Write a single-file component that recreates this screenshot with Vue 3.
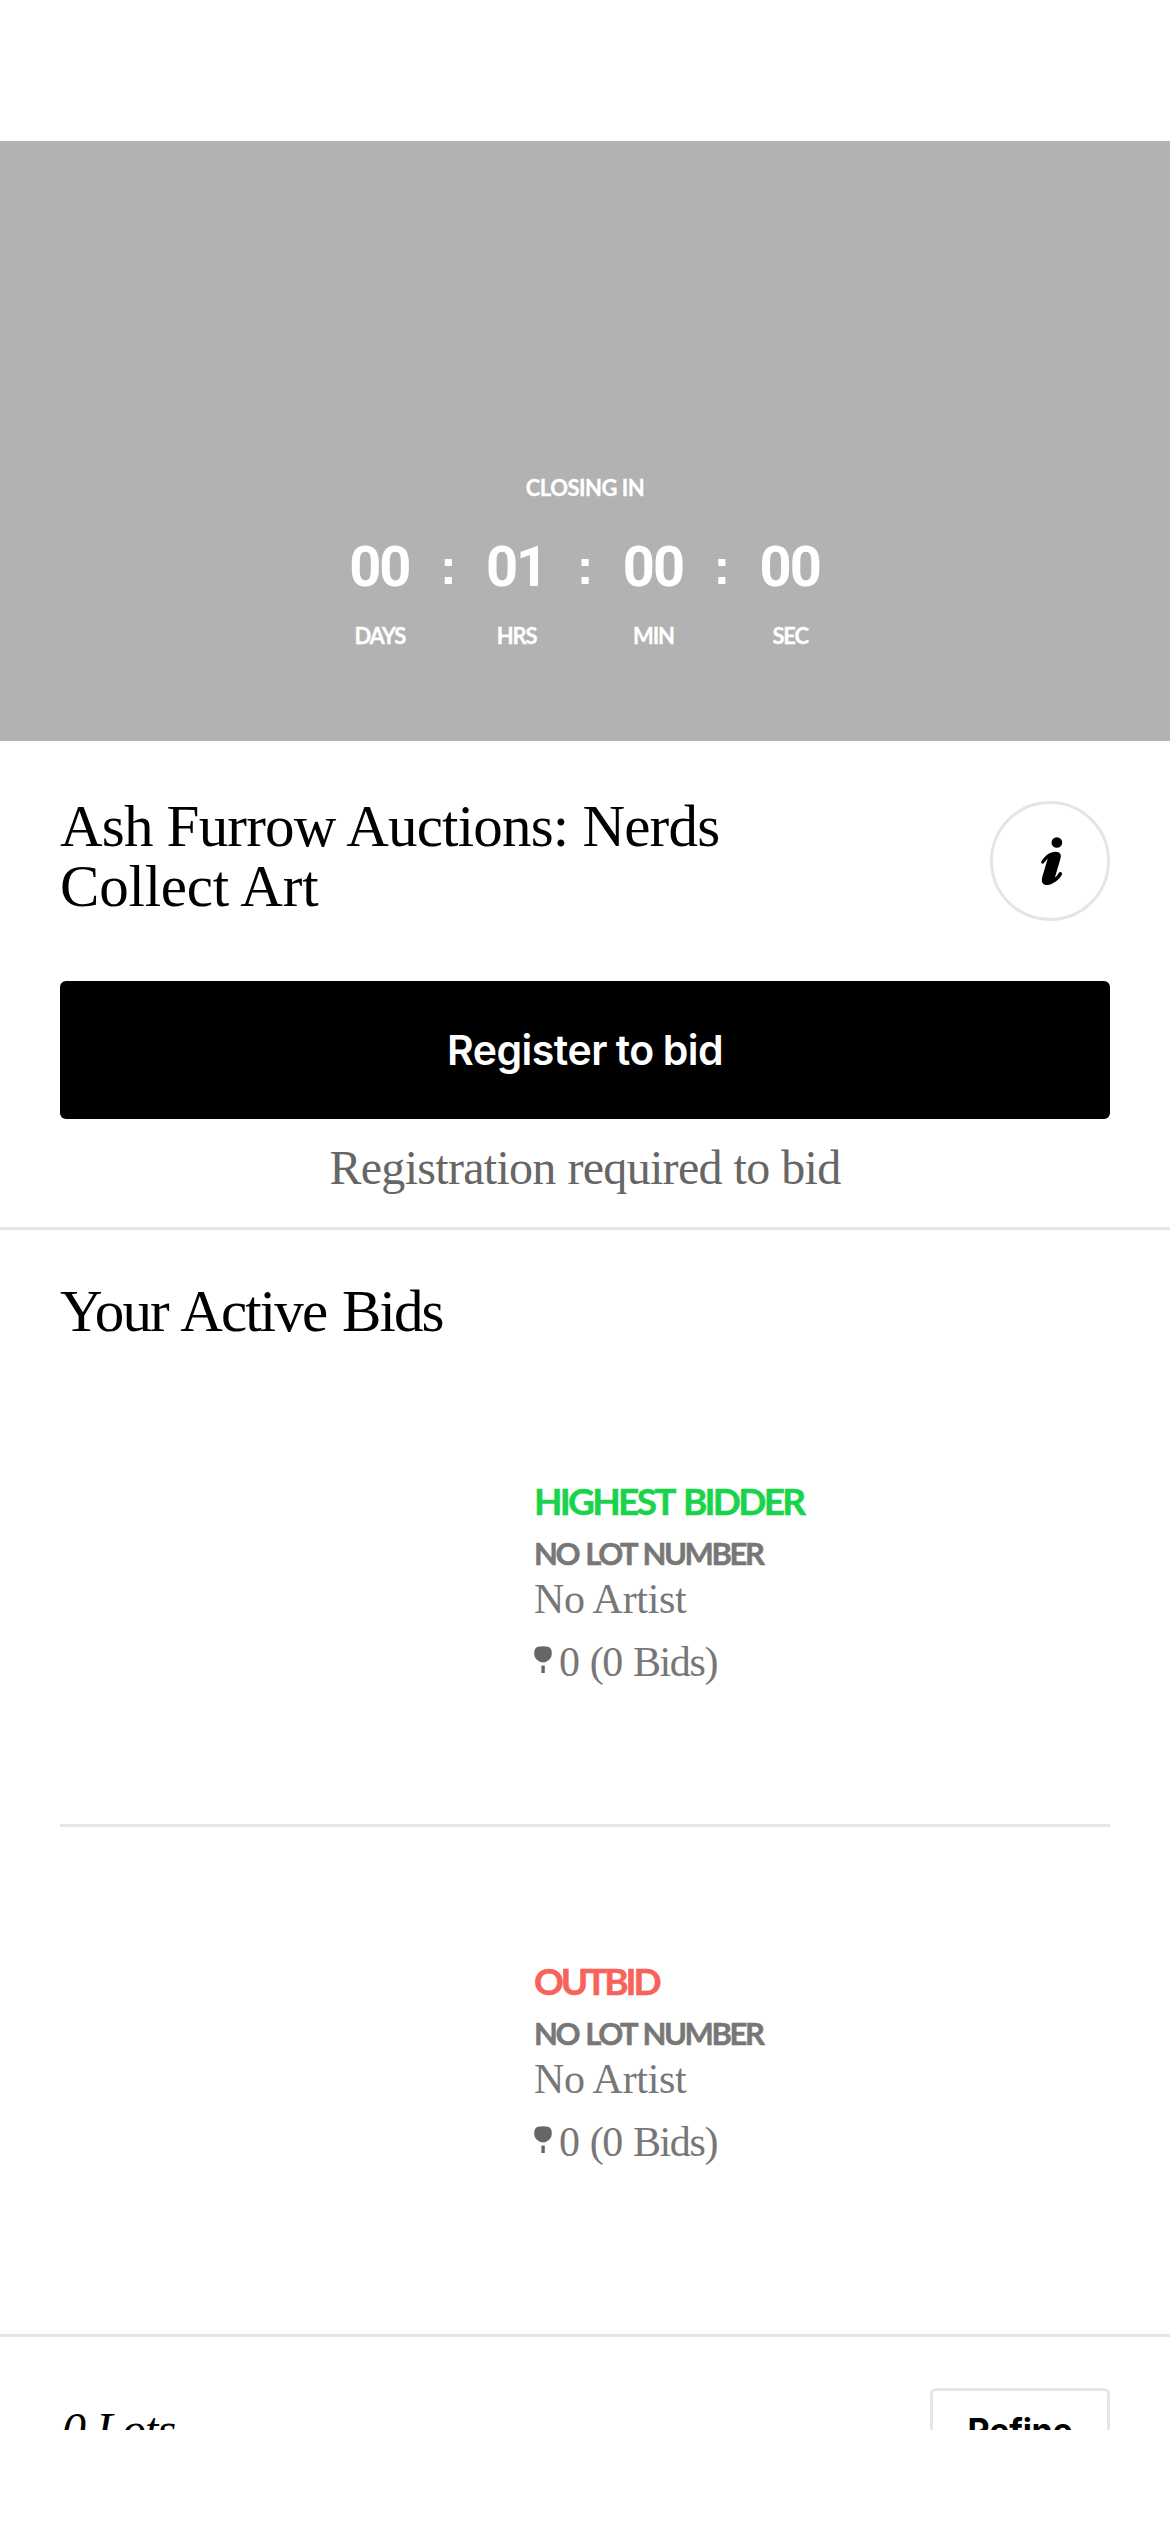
<script setup>
const timer = [
  { value: '00', label: 'DAYS' },
  { value: '01', label: 'HRS' },
  { value: '00', label: 'MIN' },
  { value: '00', label: 'SEC' },
]
const bids = [
  { id: 1, status: 'HIGHEST BIDDER', kind: 'winning' },
  { id: 2, status: 'OUTBID', kind: 'losing' },
]
</script>

<template>
  <div class="screen">
    <main class="scroll">
      <section class="hero">
        <p class="closing">CLOSING IN</p>
        <div class="timer">
          <template v-for="(unit, i) in timer" :key="unit.label">
            <span v-if="i" class="colon">:</span>
            <div class="unit">
              <span class="digits">{{ unit.value }}</span>
              <span class="label">{{ unit.label }}</span>
            </div>
          </template>
        </div>
      </section>

      <section class="intro">
        <div class="heading">
          <h1 class="title">Ash Furrow Auctions: Nerds<br /><span class="title-end">Collect Art</span></h1>
          <button class="info" aria-label="Info">
            <svg viewBox="0 0 360 360" width="120" height="120">
              <circle cx="180" cy="180" r="175.5" fill="none" stroke="#e5e5e5" stroke-width="9" />
              <circle cx="200.500" cy="124.500" r="16" />
              <path d="M154 181C166 163 179 152 197 152C211 152 215 161 211 174L195 229C199 227 202 222 206 216C210 210 218 213 216 220C210 235 188 252 172 252C157 252 153 243 157 227L173 173C169 176 166 181 162 186C158 191 151 187 154 181Z" />
            </svg>
          </button>
        </div>
        <button class="register">Register to bid</button>
        <p class="note">Registration required to bid</p>
      </section>

      <section class="active">
        <h2 class="subtitle">Your Active Bids</h2>
        <article v-for="bid in bids" :key="bid.id" class="bid">
          <div class="thumb"></div>
          <div class="details">
            <p class="status" :class="bid.kind">{{ bid.status }}</p>
            <p class="lot">NO LOT NUMBER</p>
            <p class="artist">No Artist</p>
            <p class="count">
              <svg class="paddle" viewBox="0 0 18 28" width="18" height="28">
                <path d="M4 .8Q9 -.4 14 .8Q17.800 2 17.800 7Q18 11 15.500 13.500Q12 16.600 9 16.600Q6 16.600 2.500 13.500Q0 11 .2 7Q.2 2 4 .8Z" />
                <path d="M7.400 19.500h3.400V27H7.400z" />
              </svg>
              <span>0 (0 Bids)</span>
            </p>
          </div>
        </article>
      </section>

      <section class="lots">
        <p class="lots-count">0 Lots</p>
        <button class="refine">Refine</button>
      </section>
    </main>
  </div>
</template>

<style>
body {
  margin: 0;
  background: #fff;
}
</style>

<style scoped>
.screen {
  width: 1170px;
  height: 2532px;
  background: #fff;
  overflow: hidden;
  font-family: "Liberation Serif", serif;
  color: #000;
}
p, h1, h2 {
  margin: 0;
  font-weight: 400;
}
button {
  padding: 0;
  border: 0;
  background: none;
  color: inherit;
}
.scroll {
  box-sizing: border-box;
  height: 2430px;
  padding-top: 141px;
  overflow: hidden;
}
.hero {
  box-sizing: border-box;
  height: 600px;
  padding-top: 331px;
  background: #b2b2b2;
  color: #fff;
  text-align: center;
}
.closing,
.label {
  font: 700 22px/32px Lato, sans-serif;
  letter-spacing: -0.5px;
  -webkit-text-stroke: 0.3px currentColor;
}
.timer {
  display: grid;
  grid-template-columns: repeat(7, 68.400px);
  justify-content: center;
  margin-top: 33px;
}
.unit {
  display: flex;
  flex-direction: column;
  align-items: center;
}
.digits,
.colon {
  font: 700 56px/60px Roboto, sans-serif;
  letter-spacing: -2px;
  white-space: nowrap;
}
.digits {
  margin-left: -1px;
}
.colon {
  font-family: "Liberation Sans", sans-serif;
  font-size: 50px;
  letter-spacing: 0;
}
.label {
  margin-top: 23px;
  letter-spacing: -1.2px;
}
.intro {
  padding: 60px 60px 29px;
  border-bottom: 3px solid #e5e5e5;
}
.heading {
  display: flex;
  justify-content: space-between;
  align-items: flex-start;
  height: 120px;
}
.title,
.subtitle {
  font-size: 59px;
  line-height: 60px;
  letter-spacing: -0.8px;
  white-space: nowrap;
}
.title {
  margin-top: -5px;
}
.title-end {
  letter-spacing: -0.2px;
}
.info {
  width: 120px;
  height: 120px;
}
.info svg {
  display: block;
}
.register {
  display: block;
  width: 100%;
  height: 138px;
  margin-top: 60px;
  border-radius: 6px;
  background: #000;
  color: #fff;
  font: 600 41px/136px Inter, sans-serif;
  letter-spacing: -0.5px;
  word-spacing: -1px;
}
.note {
  margin-top: 19px;
  color: #666;
  font-size: 48px;
  line-height: 60px;
  letter-spacing: -0.7px;
  word-spacing: 0.5px;
  text-align: center;
}
.active {
  padding: 51px 60px 30px;
  border-bottom: 3px solid #e5e5e5;
}
.subtitle {
  margin-bottom: 6px;
  letter-spacing: -1.9px;
  word-spacing: 3px;
}
.bid {
  display: flex;
  align-items: center;
  height: 477px;
}
.bid + .bid {
  border-top: 3px solid #e5e5e5;
}
.thumb {
  width: 474px;
}
.details {
  margin-bottom: 8px;
  color: #777;
}
.status,
.lot {
  -webkit-text-stroke: 0.5px currentColor;
}
.status {
  font: 700 37px/45px Lato, sans-serif;
}
.winning {
  color: #19d44a;
  letter-spacing: -2.7px;
  word-spacing: 4px;
}
.losing {
  color: #f7625a;
  letter-spacing: -3.1px;
}
.lot {
  margin-top: 15px;
  font: 700 31px/30px Lato, sans-serif;
  letter-spacing: -2.4px;
  word-spacing: 2px;
}
.artist,
.count {
  font-size: 42px;
  line-height: 48px;
}
.artist {
  margin-top: 7px;
  letter-spacing: -0.3px;
}
.count {
  display: flex;
  margin-top: 15px;
  letter-spacing: -1.4px;
  word-spacing: 2px;
}
.paddle {
  margin: 8px 7px 0 0;
  fill: #666;
}
.lots {
  display: flex;
  justify-content: space-between;
  padding: 51px 60px 0;
}
.lots-count {
  margin: 12px 0 0 2px;
  font-size: 48px;
  font-style: italic;
  line-height: 60px;
  letter-spacing: -0.9px;
}
.refine {
  box-sizing: border-box;
  width: 180px;
  height: 90px;
  padding-bottom: 4px;
  border: 3px solid #e5e5e5;
  border-radius: 6px;
  font: 700 34px/80px Inter, sans-serif;
  letter-spacing: -0.3px;
}
</style>
